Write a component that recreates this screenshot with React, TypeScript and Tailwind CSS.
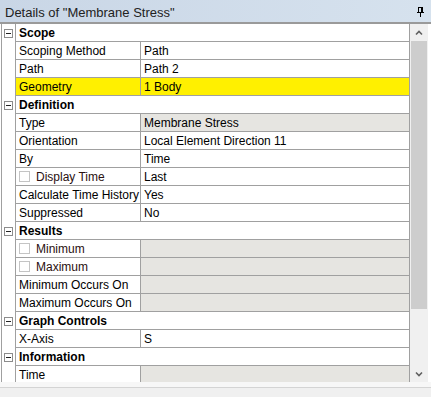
import React from "react";

type Row =
  | { kind: "header"; label: string }
  | { kind: "data"; label: string; value?: string; check?: boolean; gray?: boolean; yellow?: boolean };

const rows: Row[] = [
  { kind: "header", label: "Scope" },
  { kind: "data", label: "Scoping Method", value: "Path" },
  { kind: "data", label: "Path", value: "Path 2" },
  { kind: "data", label: "Geometry", value: "1 Body", yellow: true },
  { kind: "header", label: "Definition" },
  { kind: "data", label: "Type", value: "Membrane Stress", gray: true },
  { kind: "data", label: "Orientation", value: "Local Element Direction 11" },
  { kind: "data", label: "By", value: "Time" },
  { kind: "data", label: "Display Time", value: "Last", check: true },
  { kind: "data", label: "Calculate Time History", value: "Yes" },
  { kind: "data", label: "Suppressed", value: "No" },
  { kind: "header", label: "Results" },
  { kind: "data", label: "Minimum", check: true, gray: true },
  { kind: "data", label: "Maximum", check: true, gray: true },
  { kind: "data", label: "Minimum Occurs On", gray: true },
  { kind: "data", label: "Maximum Occurs On", gray: true },
  { kind: "header", label: "Graph Controls" },
  { kind: "data", label: "X-Axis", value: "S" },
  { kind: "header", label: "Information" },
  { kind: "data", label: "Time", gray: true },
];

function Minus() {
  return (
    <div className="w-[9px] h-[9px] border border-[#8c8c8c] bg-white flex items-center justify-center">
      <div className="w-[5px] h-px bg-[#222]" />
    </div>
  );
}

function Pin() {
  return (
    <svg width="7" height="10" viewBox="0 0 7 10" shapeRendering="crispEdges">
      <rect x="1" y="0" width="5" height="1" fill="#000" />
      <rect x="1" y="0" width="1" height="6" fill="#000" />
      <rect x="4" y="0" width="2" height="6" fill="#000" />
      <rect x="0" y="5" width="7" height="1" fill="#000" />
      <rect x="3" y="6" width="1" height="4" fill="#000" />
    </svg>
  );
}

function Chevron({ down }: { down?: boolean }) {
  return (
    <svg width="8" height="6" viewBox="0 0 8 6">
      <polyline
        points={down ? "1,1.5 4,4.5 7,1.5" : "1,4.5 4,1.5 7,4.5"}
        fill="none"
        stroke="#606060"
        strokeWidth="1.6"
      />
    </svg>
  );
}

export default function App() {
  return (
    <div
      className="w-[431px] h-[397px] bg-white flex flex-col overflow-hidden text-[12px] text-black"
      style={{ fontFamily: '"Liberation Sans", Arial, sans-serif' }}
    >
      {/* Title bar */}
      <div className="h-[22px] flex items-center justify-between pl-[5px] pr-[7px] bg-gradient-to-r from-[#c9d6e6] to-[#d6e2ee] text-[13px] text-[#222]">
        <span className="leading-[18px] pt-[4px]">Details of "Membrane Stress"</span>
        <div className="pt-[2px]">
          <Pin />
        </div>
      </div>
      <div className="h-[2px] bg-[#9a9a9a]" />

      {/* Body */}
      <div className="h-[358px] flex">
        <div className="ml-px w-[409px] border-l border-[#a0a0a0] overflow-hidden flex flex-col">
          {rows.map((r, i) => (
            <div key={i} className="flex h-[18px] shrink-0">
              <div className="w-[13px] flex items-center justify-center pt-px">
                {r.kind === "header" && <Minus />}
              </div>
              <div className="flex-1 flex border-l border-r border-b border-[#a0a0a0]">
                {r.kind === "header" ? (
                  <div className="pl-[3px] pt-px leading-[16px] font-bold">{r.label}</div>
                ) : (
                  <>
                    <div
                      className={`w-[125px] border-r border-[#a0a0a0] pl-[3px] flex items-center gap-[6px] ${
                        r.yellow ? "bg-[#fff000]" : ""
                      }`}
                    >
                      {r.check && (
                        <div className="w-[11px] h-[11px] border border-[#c4c4c4] bg-white shrink-0" />
                      )}
                      <span className={`pt-px leading-[16px] ${r.check ? "text-[#2a1010]" : ""}`}>{r.label}</span>
                    </div>
                    <div
                      className={`flex-1 pl-[3px] pt-px leading-[16px] ${
                        r.yellow ? "bg-[#fff000]" : r.gray ? "bg-[#e6e5e1]" : ""
                      }`}
                    >
                      {r.value}
                    </div>
                  </>
                )}
              </div>
            </div>
          ))}
        </div>

        {/* Scrollbar */}
        <div className="w-[18px] bg-[#f0f0f0] flex flex-col pl-px pr-px">
          <div className="h-[17px] flex items-center justify-center">
            <Chevron />
          </div>
          <div className="h-[268px] bg-[#cdcdcd]" />
          <div className="flex-1" />
          <div className="h-[17px] flex items-center justify-center">
            <Chevron down />
          </div>
        </div>
        <div className="flex-1 bg-white" />
      </div>

      {/* Bottom */}
      <div className="h-[5px] bg-[#f7f7f7]" />
      <div className="h-px bg-[#d4d4d4]" />
      <div className="flex-1 bg-[#f0f0f0]" />
    </div>
  );
}
